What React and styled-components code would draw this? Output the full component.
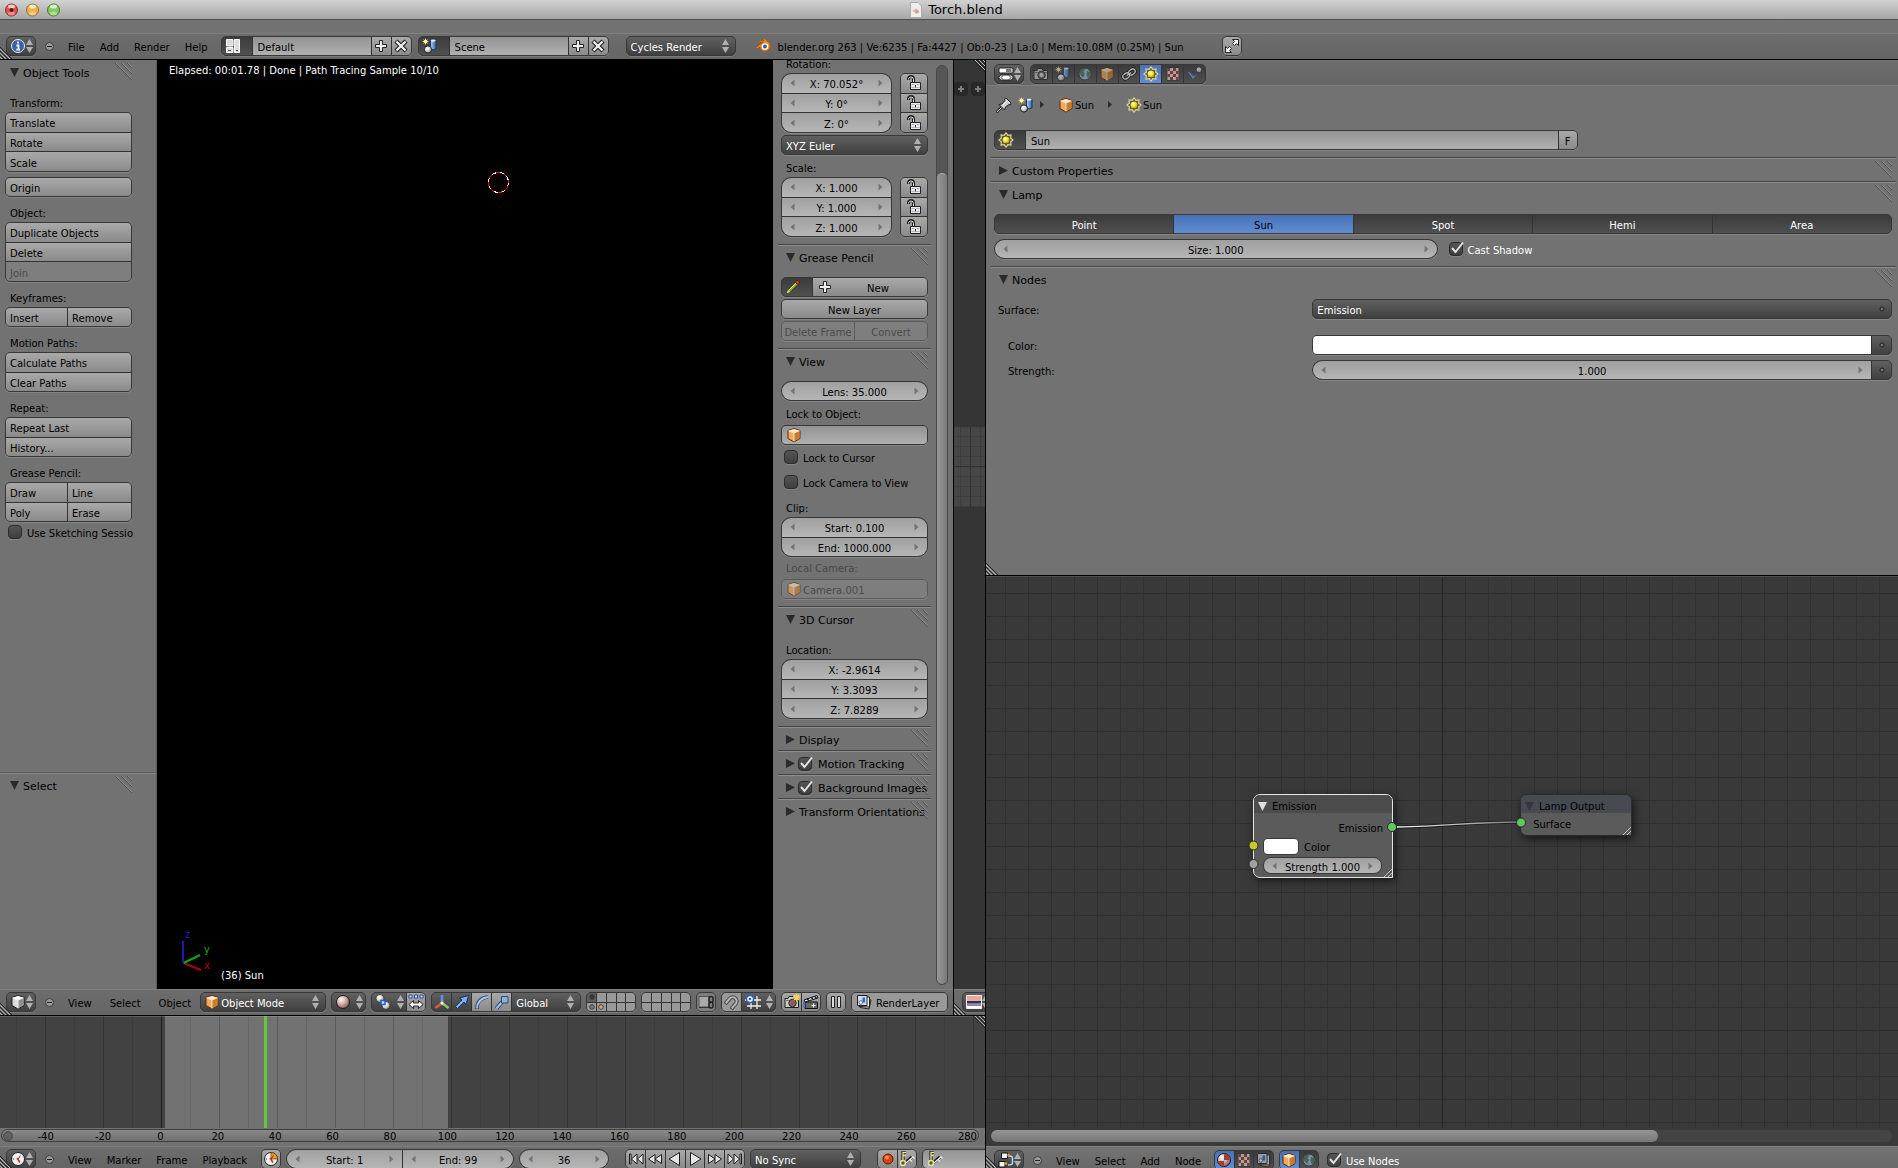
import React from 'react';
import styled, { createGlobalStyle, css } from 'styled-components';

const GlobalStyle = createGlobalStyle`
  * {
    box-sizing: border-box;
  }

  body {
    margin: 0;
    background: #727272;
    overflow: hidden;
  }

  body, button, input, select {
    font-family: 'DejaVu Sans', sans-serif;
    font-size: 10px;
    color: #000;
  }

  svg {
    display: block;
    flex: none;
  }
`;

const fills = {
  tool: 'linear-gradient(#a9a9a9, #8a8a8a)',
  flat: '#999999',
  num: 'linear-gradient(#a0a0a0, #b6b6b6)',
  text: 'linear-gradient(#939393, #b0b0b0)',
  menu: 'linear-gradient(#606060, #404040)',
  radio: 'linear-gradient(#3b3b3b, #505050)',
  blue: 'linear-gradient(#4871b6, #628dd2)',
  off: '#7e7e7e',
};

/* ---------- window frame ---------- */

const Window = styled.div`
  display: flex;
  flex-direction: column;
  height: 100vh;
  overflow: hidden;
  background: #727272;
`;

const TitleBar = styled.header`
  flex: none;
  display: grid;
  grid-template-columns: 1fr auto 1fr;
  align-items: center;
  height: 20px;
  padding: 0 5px;
  background: linear-gradient(#d2d2d2, #a6a6a6);
  border-bottom: 1px solid #515151;
`;

const Lights = styled.div`
  display: flex;
  gap: 8px;
`;

const Title = styled.h1`
  display: flex;
  align-items: center;
  gap: 6px;
  margin: 0 0 0 15px;
  font-size: 13px;
  line-height: 18px;
  font-weight: normal;
`;

const Strip = styled.div`
  flex: none;
  height: 13px;
  background: #727272;
`;

const Bar = styled.div`
  position: relative;
  flex: none;
  display: flex;
  align-items: flex-start;
  height: ${(p) => p.$height || 26}px;
  padding: ${(p) => p.$top || 2}px 6px 0;
  overflow: hidden;
  background: linear-gradient(#6d6d6d, #656565);
  border-top: 1px solid #808080;
`;

const InfoBar = styled(Bar)`
  border-bottom: 1px solid #000;
`;

const Workspace = styled.main`
  flex: 1;
  min-height: 0;
  display: grid;
  grid-template-columns: minmax(0, 986fr) minmax(0, 912fr);
`;

const LeftSide = styled.div`
  display: grid;
  grid-template-rows: minmax(0, 1fr) 152px;
  min-height: 0;
  border-right: 1px solid #000;
`;

const RightSide = styled.div`
  display: grid;
  grid-template-rows: minmax(0, 516fr) minmax(0, 592fr);
  min-height: 0;
`;

const TopLeft = styled.div`
  display: grid;
  grid-template-columns: minmax(0, 1fr) 31px;
  min-height: 0;
  border-bottom: 1px solid #000;
`;

const Area = styled.section`
  position: relative;
  display: flex;
  flex-direction: column;
  min-width: 0;
  min-height: 0;
  overflow: hidden;
`;

const ViewArea = styled(Area)`
  border-right: 1px solid #000;
`;

const CornerSvg = styled.svg`
  position: absolute;
  ${(p) => (p.$bottom ? 'bottom: 0; left: 0;' : 'top: 0; right: 0;')}
`;

function Corner({ bottom }) {
  return (
    <CornerSvg $bottom={bottom} width="12" height="12" viewBox="0 0 12 12" fill="none">
      <path d="M0 0L12 12M4 0L12 8M8 0L12 4" stroke="#222" transform={bottom ? 'rotate(180 6 6)' : undefined} />
      <path d="M2 0L12 10M6 0L12 6M10 0L12 2" stroke="#b4b4b4" transform={bottom ? 'rotate(180 6 6)' : undefined} />
    </CornerSvg>
  );
}

/* ---------- controls ---------- */

const Cluster = styled.div`
  flex: none;
  display: grid;
  grid-template-columns: ${(p) => p.$cols || 'minmax(0, 1fr)'};
  grid-auto-rows: minmax(0, 1fr);
  gap: 1px;
  width: ${(p) => (p.$width ? `${p.$width}px` : 'auto')};
  height: calc(20px * ${(p) => p.$rows || 1});
  margin-left: ${(p) => p.$left || 0}px;
  overflow: hidden;
  background: ${(p) => (p.$off ? '#5a5a5a' : '#333')};
  border: 1px solid ${(p) => (p.$off ? '#5a5a5a' : '#383838')};
  border-radius: ${(p) => (p.$round ? 10 : 5)}px;
  box-shadow: 0 1px 0 rgba(255, 255, 255, 0.14);
`;

const cell = css`
  min-width: 0;
  margin: 0;
  border: 0;
  outline: 0;
  border-radius: 0;
`;

const Btn = styled.button`
  ${cell}
  display: flex;
  align-items: center;
  justify-content: ${(p) => (p.$start ? 'flex-start' : 'center')};
  padding: 3px ${(p) => (p.$start ? 4 : 0)}px 0;
  white-space: nowrap;
  background: ${(p) => fills[p.$fill || 'tool']};
  color: ${(p) => (p.$fill === 'radio' ? '#fff' : '#000')};

  &:disabled {
    background: ${fills.off};
    color: #4a4a4a;
  }
`;

const IconBtn = styled(Btn)`
  padding: 0;
`;

const WideBtn = styled(Btn)`
  justify-content: flex-start;
  padding: 0 4px;

  span {
    flex: 1;
    padding-top: 3px;
    text-align: center;
  }
`;

const TextInput = styled.input`
  ${cell}
  width: 100%;
  padding: 3px 5px 0;
  background: ${fills.text};

  &:disabled {
    color: #4a4a4a;
  }
`;

const IconField = styled.div`
  display: flex;
  align-items: center;
  padding-left: 4px;
  background: ${(p) => (p.$off ? fills.off : fills.text)};

  ${TextInput} {
    padding-left: 1px;
    background: none;
  }
`;

const NumCell = styled.div`
  display: flex;
  align-items: center;
  min-width: 0;
  padding: 0 8px;
  background: ${fills.num};
`;

const NumInput = styled.input`
  ${cell}
  flex: 1;
  width: 0;
  padding: 3px 0 0;
  text-align: center;
  background: none;
`;

const SelectBox = styled.div`
  display: grid;
  grid-template-columns: minmax(0, 1fr);
  align-items: center;
  min-width: 0;
  background: ${(p) => fills[p.$fill || 'menu']};

  > * {
    grid-area: 1 / 1;
  }

  > svg {
    pointer-events: none;
    margin-left: 3px;
  }
`;

const EndSlot = styled.div`
  justify-self: end;
  margin-right: ${(p) => p.$right}px;
  pointer-events: none;
`;

const Select = styled.select`
  ${cell}
  appearance: none;
  width: 100%;
  height: 100%;
  padding: 3px 0 0 ${(p) => (p.$icon ? 20 : 4)}px;
  color: #fff;
  background: none;
`;

const ColorInput = styled.input`
  ${cell}
  appearance: none;
  width: 100%;
  height: 100%;
  padding: 0;
  background: #fff;

  &::-webkit-color-swatch-wrapper {
    padding: 0;
  }

  &::-webkit-color-swatch {
    border: 0;
  }
`;

const CheckLabel = styled.label`
  display: flex;
  align-items: center;
  gap: 3px;
  height: 20px;
  margin-left: ${(p) => p.$left || 0}px;
  white-space: nowrap;
  color: ${(p) => (p.$white ? '#fff' : '#000')};

  span {
    padding-top: 2px;
  }
`;

const CheckStack = styled.div`
  flex: none;
  display: grid;
  width: 16px;
  height: 18px;
  align-items: center;

  > * {
    grid-area: 1 / 1;
  }

  svg {
    pointer-events: none;
  }
`;

const CheckInput = styled.input`
  appearance: none;
  width: 14px;
  height: 14px;
  margin: 0;
  background: linear-gradient(#555, #3e3e3e);
  border: 1px solid #2c2c2c;
  border-radius: 4px;
  box-shadow: 0 1px 0 rgba(255, 255, 255, 0.14);
`;

const MenuNav = styled.nav`
  flex: none;
  display: flex;
  gap: ${(p) => p.$gap}px;
  margin-left: 13px;
`;

const MenuBtn = styled.button`
  ${cell}
  height: 20px;
  padding: 3px 0 0;
  background: none;
`;

const Collapse = styled.button`
  ${cell}
  flex: none;
  display: flex;
  align-items: center;
  height: 20px;
  margin-left: 8px;
  padding: 0;
  background: none;
`;

const Left = () => (
  <svg width="5" height="8" viewBox="0 0 5 8"><path d="M4.500 0.500V7.500L0.500 4Z" fill="#747474" /></svg>
);

const Right = () => (
  <svg width="5" height="8" viewBox="0 0 5 8"><path d="M0.500 0.500V7.500L4.500 4Z" fill="#747474" /></svg>
);

function NumField({ label, value, prefix = true }) {
  return (
    <NumCell>
      <Left />
      <NumInput aria-label={label} defaultValue={prefix ? `${label}: ${value}` : value} />
      <Right />
    </NumCell>
  );
}

function UpDown() {
  return (
    <svg width="9" height="14" viewBox="0 0 9 14">
      <path d="M4.500 0L8 6H1ZM4.500 14L8 8H1Z" fill="#b0b0b0" />
    </svg>
  );
}

function Menu({ label, value, icon }) {
  return (
    <SelectBox>
      <Select aria-label={label} $icon={Boolean(icon)}>
        <option>{value || ''}</option>
      </Select>
      {icon}
      <EndSlot $right={value ? 5 : 1}><UpDown /></EndSlot>
    </SelectBox>
  );
}

function Check({ label, checked, left, white, children }) {
  return (
    <CheckLabel $left={left} $white={white}>
      <CheckStack>
        <CheckInput type="checkbox" defaultChecked={checked} aria-label={label} />
        {checked && (
          <svg width="16" height="18" viewBox="0 0 16 18" fill="none">
            <path d="M3 8L6.500 12L14 2.500" stroke="#e2e2e2" strokeWidth="2" />
          </svg>
        )}
      </CheckStack>
      <span>{children || label}</span>
    </CheckLabel>
  );
}

function Menus({ items, gap }) {
  return (
    <>
      <Collapse aria-label="Collapse menus">
        <svg width="11" height="11" viewBox="0 0 11 11">
          <circle cx="5.500" cy="5.500" r="4" fill="#9a9a9a" stroke="#3c3c3c" />
          <path d="M3 5.500H8" stroke="#222" />
        </svg>
      </Collapse>
      <MenuNav $gap={gap}>
        {items.map((item) => <MenuBtn key={item}>{item}</MenuBtn>)}
      </MenuNav>
    </>
  );
}

/* ---------- icons ---------- */

function Icon({ children, size = 16, dim }) {
  return (
    <svg width={size} height={size} viewBox="0 0 16 16" fill="none" opacity={dim ? 0.6 : 1}>
      {children}
    </svg>
  );
}

const DefsSvg = styled.svg`
  position: absolute;
`;

function Defs() {
  return (
    <DefsSvg width="0" height="0">
      <defs>
        <radialGradient id="ball" cx="0.35" cy="0.3" r="0.8">
          <stop offset="0" stopColor="#fff" />
          <stop offset="0.4" stopColor="#e4e4e4" />
          <stop offset="1" stopColor="#7c7c7c" />
        </radialGradient>
        <radialGradient id="redball" cx="0.35" cy="0.3" r="0.8">
          <stop offset="0" stopColor="#fff" />
          <stop offset="0.5" stopColor="#d0a89e" />
          <stop offset="1" stopColor="#7a4a40" />
        </radialGradient>
        <radialGradient id="sunball" cx="0.4" cy="0.35" r="0.7">
          <stop offset="0" stopColor="#ffffe0" />
          <stop offset="0.45" stopColor="#f5e53c" />
          <stop offset="1" stopColor="#b39a10" />
        </radialGradient>
        <linearGradient id="blueTube">
          <stop offset="0" stopColor="#b4d2f8" />
          <stop offset="1" stopColor="#2f62ad" />
        </linearGradient>
        <linearGradient id="linkFade">
          <stop offset="0" stopColor="#fff" />
          <stop offset="1" stopColor="#777" />
        </linearGradient>
      </defs>
    </DefsSvg>
  );
}

const InfoIcon = () => (
  <Icon>
    <circle cx="8" cy="8" r="6.500" fill="#3a62a4" stroke="#e8eefc" />
    <path d="M8 3.500V5.500M6.500 7.500H8.500V11.500M6.300 11.700H10" stroke="#fff" strokeWidth="1.800" />
  </Icon>
);

const ScreenIcon = () => (
  <Icon>
    <path d="M1.500 1.500H8V8H1.500ZM1.500 9.500H8V14.500H1.500ZM9.500 1.500H14.500V14.500H9.500Z" fill="#dcdcdc" stroke="#fff" />
    <path d="M3 12.500H6M11 12.500H13" stroke="#555" />
  </Icon>
);

const SceneIcon = ({ dim }) => (
  <Icon dim={dim}>
    <path d="M3.500 0.500V6.500M0.500 3.500H6.500M1.500 1.500L5.500 5.500M5.500 1.500L1.500 5.500" stroke="#c9c060" />
    <circle cx="3.500" cy="3.500" r="2" fill="#fbf6a0" />
    <path d="M8.500 2.500Q11 0.500 14 2.500V11Q11.500 12.500 8.500 11Z" fill="url(#blueTube)" stroke="#1c3966" />
    <ellipse cx="11.200" cy="2.600" rx="2.500" ry="1.100" fill="#e4effd" />
    <circle cx="6" cy="11.500" r="3.600" fill="url(#ball)" stroke="#222" />
  </Icon>
);

const PlusIcon = () => (
  <Icon>
    <path d="M6.500 2.500H9.500V6.500H13.500V9.500H9.500V13.500H6.500V9.500H2.500V6.500H6.500Z" fill="#eee" stroke="#222" />
  </Icon>
);

const CloseIcon = () => (
  <Icon>
    <path d="M3 3L13 13M13 3L3 13" stroke="#222" strokeWidth="4.500" />
    <path d="M3.500 3.500L12.500 12.500M12.500 3.500L3.500 12.500" stroke="#f2f2f2" strokeWidth="2.200" />
  </Icon>
);

const BlenderIcon = ({ size }) => (
  <Icon size={size}>
    <path d="M1 9.500L8.500 4H4V2.500H9L8 1.500L9.500 0.500L14.500 5Q16 8 14.500 11Q11.500 14.500 7.500 13Q5 11.500 5 9L1.800 11Z" fill="#ef8a22" stroke="#9c4c0c" strokeWidth="0.600" />
    <circle cx="10" cy="8.500" r="3.300" fill="#fff" />
    <circle cx="10" cy="8.500" r="1.900" fill="#2a5da8" />
  </Icon>
);

const FullIcon = () => (
  <Icon>
    <path d="M8.500 1.500H14.500V7.500L12.500 5.500L10.500 7.500L8.500 5.500L10.500 3.500ZM7.500 14.500H1.500V8.500L3.500 10.500L5.500 8.500L7.500 10.500L5.500 12.500Z" fill="#f4f4f4" stroke="#222" />
  </Icon>
);

const CubeIcon = ({ orange, dim }) => (
  <Icon dim={dim}>
    <path d="M8 1.500L14 3.500V11.500L8 15L2 11.500V3.500Z" fill={orange ? '#f3a95c' : '#dcdcdc'} stroke={orange ? '#5a2d06' : '#1d1d1d'} />
    <path d="M8 2L13.500 3.800L8 6L2.500 3.800Z" fill={orange ? '#fde6cb' : '#fff'} />
    <path d="M8 6L13.500 3.800V11.200L8 14.400Z" fill={orange ? '#c97c2c' : '#909090'} />
    <path d="M2.500 3.800L8 6L13.500 3.800M8 6V14.400" stroke={orange ? '#fff0dc' : '#fff'} strokeWidth="0.800" />
  </Icon>
);

const LockIcon = () => (
  <Icon>
    <path d="M2.500 5V3.500Q3 1.500 5 1.500Q7.500 1.500 7.500 4V7" stroke="#222" strokeWidth="3" />
    <path d="M2.500 4.500V3.800Q3 2 5 2Q7.500 2 7.500 4.500V7" stroke="#ddd" />
    <path d="M4.500 7.500H14.500V14.500H4.500Z" fill="#e9e9e9" stroke="#222" />
    <path d="M5.500 9.500H8.500M10.500 9.500H13.500M5.500 12.500H8.500M10.500 12.500H13.500" stroke="#aab4c4" />
    <path d="M9.500 10V12.500" stroke="#222" />
  </Icon>
);

const PencilIcon = () => (
  <Icon>
    <path d="M1.500 14.500L3 10.500L10.500 3L13 5.500L5.500 13Z" fill="#8fb436" stroke="#26300a" />
    <path d="M4 11L11 4" stroke="#d9f07f" />
    <path d="M10.500 3L12 1.500Q14.500 1.500 14.500 4L13 5.500Z" fill="#e44" stroke="#6d1313" />
    <path d="M1.500 14.500L3 10.800L5.300 13Z" fill="#f0d49a" />
  </Icon>
);

const PropsIcon = () => (
  <Icon>
    <rect x="1" y="2" width="14" height="5" rx="1.500" fill="#fff" stroke="#222" />
    <path d="M8 3H13.500V6H8Z" fill="#777" />
    <rect x="1" y="9" width="14" height="5" rx="2.500" fill="#fff" stroke="#222" />
    <path d="M5 9.500L3 11.500L5 13.500M11 9.500L13 11.500L11 13.500" stroke="#222" />
  </Icon>
);

const CameraIcon = ({ dim, star }) => (
  <Icon dim={dim}>
    <path d="M1 4.500H4L5 2.500H9L10 4.500H14.500V13.500H1Z" fill="#c9c9c9" stroke="#222" />
    <path d="M1.500 6.500H14" stroke="#777" />
    <circle cx="8.500" cy="9" r="3.700" fill="#777" stroke="#222" />
    <circle cx="8.500" cy="9" r="2" fill={star ? '#b44' : '#ddd'} />
    {star && <path d="M12.500 0V7M9 3.500H16M10 1L15 6M15 1L10 6" stroke="#ffd94a" strokeWidth="1.300" />}
  </Icon>
);

const WorldIcon = ({ dim }) => (
  <Icon dim={dim}>
    <circle cx="8" cy="8" r="6" fill="#9cc0e2" stroke="#1e3547" />
    <path d="M3.500 4Q6 2 8 3L6.500 6L8 8L6 12Q3 9 2.500 7ZM10 5L13.500 6V10L11 13L9.500 9Z" fill="#4c7a56" />
  </Icon>
);

const LinkIcon = () => (
  <Icon>
    <g transform="rotate(-35 8 8)">
      <g stroke="#1e1e1e" strokeWidth="3">
        <rect x="1" y="5.500" width="7" height="5" rx="2.500" />
        <rect x="8" y="5.500" width="7" height="5" rx="2.500" />
      </g>
      <g stroke="#b5b5b5" strokeWidth="1.300">
        <rect x="1" y="5.500" width="7" height="5" rx="2.500" />
        <rect x="8" y="5.500" width="7" height="5" rx="2.500" />
        <path d="M5.500 8H10.500" />
      </g>
    </g>
  </Icon>
);

const rays = [0, 45, 90, 135, 180, 225, 270, 315];

const SunIcon = () => (
  <Icon>
    {rays.map((turn) => (
      <path key={turn} d="M5.700 3.800L8 0.800L10.300 3.800" transform={`rotate(${turn} 8 8)`} fill="#6b6840" stroke="#d8d298" strokeWidth="1.100" />
    ))}
    <circle cx="8" cy="8" r="4.200" fill="#4f4908" />
    <circle cx="8" cy="8" r="3.500" fill="url(#sunball)" />
  </Icon>
);

const CheckerIcon = ({ dim }) => (
  <Icon dim={dim}>
    <path d="M2 1.500H14V14.500H2Z" fill="#f2dcd8" stroke="#333" />
    <path d="M2.500 2H5V5H2.500ZM8 2H11V5H8ZM5 5H8V8H5ZM11 5H13.500V8H11ZM2.500 8H5V11H2.500ZM8 8H11V11H8ZM5 11H8V14H5ZM11 11H13.500V14H11Z" fill="#8f3a34" />
  </Icon>
);

const PhysicsIcon = () => (
  <Icon dim>
    <path d="M0.500 6L2 5L6.500 10L12 5.500L6 14Z" fill="#7ba6e2" stroke="#2b4672" />
    <circle cx="12" cy="3.800" r="3" fill="url(#ball)" stroke="#333" />
  </Icon>
);

const PinIcon = () => (
  <Icon>
    <path d="M0.500 15.500L5.500 10" stroke="#222" strokeWidth="2.500" />
    <path d="M3 7.500L8.500 13L9.500 10L13 7.500L14.500 8L15 6L10 1L8.500 2L9 3.500L6 7Z" fill="#cfcfcf" stroke="#222" />
    <path d="M1 15L5.500 10.500M7 8L11 4" stroke="#fff" />
  </Icon>
);

const MaterialIcon = ({ checker }) => (
  <Icon>
    <circle cx="8" cy="8" r="6.500" fill="url(#redball)" stroke="#1c1c1c" />
    {checker && <path d="M8 1.500A6.500 6.500 0 0 1 14.500 8H8ZM8 14.500A6.500 6.500 0 0 1 2 9H8Z" fill="#9a4238" />}
  </Icon>
);

const PivotIcon = () => (
  <Icon>
    <circle cx="5" cy="4.500" r="4" fill="url(#ball)" stroke="#222" strokeWidth="0.700" />
    <circle cx="11" cy="11.500" r="4" fill="url(#ball)" stroke="#222" strokeWidth="0.700" />
    <path d="M6 6.500H10V10.500H6Z" fill="#cfe0ff" stroke="#1d5fd0" strokeWidth="1.500" />
  </Icon>
);

const CentersIcon = () => (
  <Icon>
    <path d="M1 1H4V4H1ZM6.500 1H9.500V4H6.500ZM12 1H15V4H12Z" fill="#dbe7ff" stroke="#24488c" />
    <path d="M1 10.500L5.500 6.500V9H10.500V6.500L15 10.500L10.500 14.500V12H5.500V14.500Z" fill="#fff" stroke="#222" />
  </Icon>
);

const AxisIcon = () => (
  <Icon>
    <path d="M8 9V1" stroke="#5b92ea" strokeWidth="2.600" />
    <path d="M8 9L1.500 14" stroke="#e2553e" strokeWidth="2.600" />
    <path d="M8 9L14.500 14" stroke="#8ad048" strokeWidth="2.600" />
    <circle cx="8" cy="9" r="1.500" fill="#fff" />
  </Icon>
);

const ArrowIcon = () => (
  <Icon>
    <path d="M1.500 12.500L8 6L5.500 4L14.500 1.500L12 10.500L10 8L3.500 14.500Z" fill="#7fb0f2" stroke="#16325e" />
  </Icon>
);

const RotateIcon = () => (
  <Icon><path d="M3 15Q3 4 14 3" stroke="#2f486d" strokeWidth="3.500" /><path d="M3 14.500Q3.500 4.500 14 3" stroke="#a9c3e8" strokeWidth="1.800" /></Icon>
);

const ScaleIcon = () => (
  <Icon>
    <path d="M2.500 14.500L8 8" stroke="#2f486d" strokeWidth="4" />
    <path d="M2.500 14.500L9 7" stroke="#a9c3e8" strokeWidth="2" />
    <path d="M7.500 2.500H14V9H7.500Z" fill="#8fb0de" stroke="#2f486d" />
  </Icon>
);

const LockLayersIcon = () => (
  <Icon>
    <path d="M1 2.500H11V13H1Z" fill="#a9a9a9" stroke="#555" />
    <path d="M1 13.500H11" stroke="#333" />
    <rect x="11" y="2.500" width="4" height="6" rx="2" stroke="#222" strokeWidth="1.500" />
    <rect x="11" y="8" width="4" height="6" rx="2" stroke="#222" strokeWidth="1.500" />
  </Icon>
);

const MagnetIcon = () => (
  <Icon>
    <g transform="rotate(40 8 8)">
      <path d="M4 14V7A4 4 0 0 1 12 7V14" stroke="#4a4a4a" strokeWidth="4" />
      <path d="M4 13V7A4 4 0 0 1 12 7V13" stroke="#b5b5b5" strokeWidth="2" />
    </g>
  </Icon>
);

const SnapIcon = () => (
  <Icon>
    <path d="M6 2V15M12 2V15M0 6H16M2 12H16" stroke="#f0f0f0" strokeWidth="1.300" />
    <circle cx="5" cy="5" r="3.500" fill="#fff" stroke="#2463cf" strokeWidth="1.500" />
    <circle cx="5" cy="5" r="1.300" fill="#2463cf" />
  </Icon>
);

const ClapIcon = () => (
  <Icon>
    <path d="M2 8H14.500V14.500H2Z" fill="#666" stroke="#111" />
    <path d="M1 6L14 1.500L15 4L2 8Z" fill="#eee" stroke="#111" />
    <path d="M4 5L6 6.500M8 3.500L10 5M11.500 2.500L13.500 4" stroke="#111" strokeWidth="1.500" />
    <path d="M1 8V13" stroke="#3b77d8" strokeWidth="2" />
    <path d="M10.500 9.500V13.500M8.500 11.500H12.500" stroke="#eee" />
  </Icon>
);

const PauseIcon = () => (
  <Icon><path d="M3.500 2.500H6.500V13.500H3.500ZM9.500 2.500H12.500V13.500H9.500Z" fill="#ddd" stroke="#222" /></Icon>
);

const LayerIcon = ({ dim }) => (
  <Icon dim={dim}>
    <path d="M5 4L15 6L13 15L4 13.500Z" fill="#d8c892" stroke="#222" />
    <path d="M3 2.500L13.500 3V13L3 12.500Z" fill="#eee" stroke="#222" />
    <path d="M1.500 1.500H11V11.500H1.500Z" fill="#cfdcf5" stroke="#222" />
    <path d="M6.500 3.500H9V8.500H6.500Z" fill="#2f66c0" />
    <circle cx="4.800" cy="8.500" r="1.800" fill="#fff" stroke="#333" strokeWidth="0.700" />
  </Icon>
);

const ImageIcon = () => (
  <Icon>
    <path d="M0.500 1.500H15.500V14.500H0.500Z" fill="#e9a99b" stroke="#eee" />
    <path d="M1 7H15V9.500H1Z" fill="#34305e" />
    <path d="M1 9.500H15V12H1Z" fill="#8b86b5" />
    <path d="M1 12H15V14H1Z" fill="#fff" />
  </Icon>
);

const ClockIcon = ({ orange }) => (
  <Icon>
    <circle cx="8" cy="8" r="6.500" fill="#f1f1f1" stroke="#222" />
    {orange && <path d="M8 8V1.500A6.500 6.500 0 0 1 14.500 8Z" fill="#f49a1a" stroke="#6b3f00" strokeWidth="0.700" />}
    <path d="M8 8L10.500 4.500" stroke="#444" />
    <path d="M7 7L10 11.500" stroke="#d22" strokeWidth="1.500" />
    <circle cx="3.500" cy="8" r="0.700" fill="#555" />
  </Icon>
);

const playPaths = {
  'Jump to start': 'M1.500 3H3V13H1.500ZM3.500 8L9 3V13ZM9.500 8L15 3V13Z',
  'Previous keyframe': 'M1.500 8L8 3.500V12.500ZM8 8L14.500 3.500V12.500Z',
  'Play reverse': 'M2 8L12.500 1.500V14.500Z',
  Play: 'M3.500 1.500L14 8L3.500 14.500Z',
  'Next keyframe': 'M1.500 3.500L8 8L1.500 12.500ZM8 3.500L14.500 8L8 12.500Z',
  'Jump to end': 'M1 3L6.500 8L1 13ZM7 3L12.500 8L7 13ZM13 3H14.500V13H13Z',
};

const PlayIcon = ({ name }) => (
  <Icon><path d={playPaths[name]} fill="#e6e6e6" stroke="#1c1c1c" /></Icon>
);

const RecordIcon = () => (
  <Icon>
    <circle cx="8" cy="8" r="5" fill="#d8420f" stroke="#5d1b04" />
    <circle cx="7" cy="6.500" r="2" fill="#f58a5c" />
  </Icon>
);

const KeyIcon = () => (
  <Icon>
    <g stroke="#222" strokeWidth="3.200"><path d="M4 12V1.500H7M6 12L13 6" /></g>
    <path d="M4 10V1.500H7M4 4.500H6.500" stroke="#eee28c" strokeWidth="1.300" />
    <path d="M7 12L14 6L15.500 7.500M11 8.500L13 10.500" stroke="#e8e8e8" strokeWidth="1.300" />
    <circle cx="4" cy="12" r="2.500" fill="#555" stroke="#eee28c" strokeWidth="1.500" />
  </Icon>
);

const NodeIcon = () => (
  <Icon>
    <path d="M8 4H12Q14.500 4 14.500 7V11Q14.500 13 10 13" stroke="#bcd3f5" strokeWidth="1.500" />
    <path d="M3.500 1H9.500V6.500H3.500ZM1 9.500H7V15H1Z" fill="#f4f4f4" stroke="#111" />
    <circle cx="10.500" cy="3" r="1.300" fill="#f0981c" />
    <circle cx="8" cy="11.500" r="1.300" fill="#f0981c" />
  </Icon>
);

/* ---------- panels ---------- */

const PanelBox = styled.section`
  border-top: ${(p) => (p.$first ? '0' : '1px solid #454545')};
  box-shadow: ${(p) => (p.$first ? 'none' : 'inset 0 1px 0 #8e8e8e')};
`;

const PanelHead = styled.div`
  display: flex;
  align-items: flex-start;
  height: 23px;
  padding: 0 3px 0 8px;
`;

const PanelTitle = styled.h2`
  flex: 1;
  display: flex;
  align-items: center;
  gap: 4px;
  min-width: 0;
  height: 23px;
  margin: 0;
  padding-top: 3px;
  font-size: 11px;
  font-weight: normal;
  white-space: nowrap;

  ${CheckLabel} {
    gap: 4px;
    margin-left: -1px;
  }

  ${CheckLabel} span {
    padding-top: 0;
  }
`;

const Grip = styled.svg`
  margin: 3px 0 0 -17px;
`;

const PanelBody = styled.div`
  display: flex;
  flex-direction: column;
  gap: ${(p) => p.$gap || 0}px;
  padding: 9px 3px 7px;
`;

function Panel({ title, open, first, check, children, gap }) {
  return (
    <PanelBox $first={first}>
      <PanelHead>
        <PanelTitle>
          <svg width="9" height="10" viewBox="0 0 9 10">
            <path d={open ? 'M0 0H9L4.500 9Z' : 'M0 0L9 4.500L0 9Z'} fill="#2a2a2a" />
          </svg>
          {check ? <Check label={title} checked>{title}</Check> : title}
        </PanelTitle>
        <Grip width="17" height="17" viewBox="0 0 17 17" fill="none">
          <path d="M0 0L17 17M6 0L17 11M12 0L17 5" stroke="#4c4c4c" strokeWidth="0.800" />
          <path d="M1 0L17 16M7 0L17 10M13 0L17 4" stroke="#9a9a9a" strokeWidth="0.600" />
        </Grip>
      </PanelHead>
      {open && <PanelBody $gap={gap}>{children}</PanelBody>}
    </PanelBox>
  );
}

const Caption = styled.div`
  height: 20px;
  padding: 5px 0 0 5px;
  line-height: 14px;
  color: ${(p) => (p.$off ? '#484848' : '#000')};
`;

const Column = styled.div`
  display: flex;
  flex-direction: column;
  gap: ${(p) => p.$gap || 0}px;
`;

/* ---------- tool shelf ---------- */

const Body3D = styled.div`
  flex: 1;
  min-height: 0;
  display: grid;
  grid-template-columns: 157px minmax(0, 1fr) 180px;
`;

const Shelf = styled.aside`
  display: flex;
  flex-direction: column;
  overflow: hidden;
  border-right: 1px solid #5c5c5c;
  background: #727272;
`;

const ShelfTools = styled.div`
  flex: 713 1 0;
  padding: 0 21px 0 2px;
  overflow: hidden;
`;

const ShelfSelect = styled.div`
  flex: 216 1 0;
  border-top: 1px solid #5e5e5e;
  box-shadow: inset 0 1px 0 #858585;
  padding: 0 21px 0 2px;
`;

const half = '61px minmax(0, 1fr)';

function ToolGroup({ title, items, cols }) {
  return (
    <div>
      {title && <Caption>{title}</Caption>}
      <Cluster $rows={items.length / (cols ? 2 : 1)} $cols={cols}>
        {items.map((item) => (
          <Btn key={item} $start disabled={item === 'Join'}>{item}</Btn>
        ))}
      </Cluster>
    </div>
  );
}

function ToolShelf() {
  return (
    <Shelf>
      <ShelfTools>
        <Panel title="Object Tools" open first gap={5}>
          <ToolGroup title="Transform:" items={['Translate', 'Rotate', 'Scale']} />
          <ToolGroup items={['Origin']} />
          <ToolGroup title="Object:" items={['Duplicate Objects', 'Delete', 'Join']} />
          <ToolGroup title="Keyframes:" items={['Insert', 'Remove']} cols={half} />
          <ToolGroup title="Motion Paths:" items={['Calculate Paths', 'Clear Paths']} />
          <ToolGroup title="Repeat:" items={['Repeat Last', 'History...']} />
          <div>
            <ToolGroup title="Grease Pencil:" items={['Draw', 'Line', 'Poly', 'Erase']} cols={half} />
            <Check label="Use Sketching Sessio" left={3} />
          </div>
        </Panel>
      </ShelfTools>
      <ShelfSelect>
        <Panel title="Select" open first />
      </ShelfSelect>
    </Shelf>
  );
}

/* ---------- 3D view ---------- */

const Viewport = styled.div`
  position: relative;
  overflow: hidden;
  background: #000;
  color: #fff;
`;

const Elapsed = styled.div`
  padding: 4px 12px;
  line-height: 13px;
`;

const ObjectName = styled.div`
  position: absolute;
  left: 64px;
  bottom: 7px;
  line-height: 13px;
`;

const LampMark = styled.svg`
  position: absolute;
  left: 331px;
  top: 112px;
`;

const AxisMark = styled.svg`
  position: absolute;
  left: 22px;
  bottom: 12px;
`;

const NPanel = styled.aside`
  display: grid;
  grid-template-columns: 153px 12px;
  gap: 5px;
  padding: 0 5px;
  overflow: hidden;
  background: #727272;
`;

const NTop = styled.div`
  display: flex;
  flex-direction: column;
  gap: 2px;
  margin-top: -7px;
  padding: 0 3px 7px;
`;

const LockRow = styled.div`
  display: grid;
  grid-template-columns: minmax(0, 1fr) 28px;
  gap: 8px;
`;

const Track = styled.div`
  margin: 5px 0 4px;
  padding-top: 107px;
  border: 1px solid #474747;
  border-radius: 6px;
  background: #565656;
`;

const Thumb = styled.div`
  height: 100%;
  border-top: 1px solid #aaa;
  border-radius: 6px;
  background: linear-gradient(90deg, #979797, #7a7a7a);
`;

function LockedAxes({ title, values }) {
  return (
    <div>
      <Caption>{title}</Caption>
      <LockRow>
        <Cluster $rows={3} $round>
          {values.map(([axis, value]) => <NumField key={axis} label={axis} value={value} />)}
        </Cluster>
        <Cluster $rows={3}>
          {values.map(([axis]) => (
            <IconBtn key={axis} aria-label={`Lock ${axis}`}><LockIcon /></IconBtn>
          ))}
        </Cluster>
      </LockRow>
    </div>
  );
}

function PropertiesShelf() {
  return (
    <NPanel>
      <div>
        <NTop>
          <LockedAxes title="Rotation:" values={[['X', '70.052°'], ['Y', '0°'], ['Z', '0°']]} />
          <Cluster><Menu label="Rotation mode" value="XYZ Euler" /></Cluster>
          <LockedAxes title="Scale:" values={[['X', '1.000'], ['Y', '1.000'], ['Z', '1.000']]} />
        </NTop>
        <Panel title="Grease Pencil" open gap={2}>
          <Cluster $cols="30px minmax(0, 1fr)">
            <SelectBox $fill="radio"><PencilIcon /></SelectBox>
            <WideBtn><PlusIcon /><span>New</span></WideBtn>
          </Cluster>
          <Cluster><Btn>New Layer</Btn></Cluster>
          <Cluster $cols="72px minmax(0, 1fr)" $off>
            <Btn disabled>Delete Frame</Btn>
            <Btn disabled>Convert</Btn>
          </Cluster>
        </Panel>
        <Panel title="View" open gap={5}>
          <Column $gap={2}>
            <Cluster $round><NumField label="Lens" value="35.000" /></Cluster>
            <Caption>Lock to Object:</Caption>
            <Cluster>
              <IconField><CubeIcon orange /><TextInput aria-label="Lock to Object" /></IconField>
            </Cluster>
            <Check label="Lock to Cursor" left={3} />
          </Column>
          <Check label="Lock Camera to View" left={3} />
          <div>
            <Caption>Clip:</Caption>
            <Cluster $rows={2} $round>
              <NumField label="Start" value="0.100" />
              <NumField label="End" value="1000.000" />
            </Cluster>
            <Column $gap={2}>
              <Caption $off>Local Camera:</Caption>
              <Cluster $off>
                <IconField $off>
                  <CubeIcon orange dim />
                  <TextInput aria-label="Local Camera" defaultValue="Camera.001" disabled />
                </IconField>
              </Cluster>
            </Column>
          </div>
        </Panel>
        <Panel title="3D Cursor" open>
          <Caption>Location:</Caption>
          <Cluster $rows={3} $round>
            <NumField label="X" value="-2.9614" />
            <NumField label="Y" value="3.3093" />
            <NumField label="Z" value="7.8289" />
          </Cluster>
        </Panel>
        <Panel title="Display" />
        <Panel title="Motion Tracking" check />
        <Panel title="Background Images" check />
        <Panel title="Transform Orientations" />
      </div>
      <Track><Thumb /></Track>
    </NPanel>
  );
}

const LayerBtn = styled.button`
  ${cell}
  display: flex;
  align-items: center;
  justify-content: center;
  padding: 0;
  background: ${(p) => (p.$on ? '#5e5e5e' : '#999')};
`;

const dots = { 0: '#3a3a3a', 5: '#777', 6: '#d9a066' };

function Layers({ first }) {
  return (
    <Cluster $width={50} $left={5} $cols="repeat(5, minmax(0, 1fr))">
      {Array.from({ length: 10 }, (_, i) => (
        <LayerBtn key={i} aria-label={`Layer ${first + i}`} $on={first === 1 && i === 0}>
          {first === 1 && dots[i] && (
            <svg width="6" height="6" viewBox="0 0 6 6"><circle cx="3" cy="3" r="2.300" fill={dots[i]} stroke="#333" strokeWidth="0.800" /></svg>
          )}
        </LayerBtn>
      ))}
    </Cluster>
  );
}

function View3D() {
  return (
    <ViewArea>
      <Body3D>
        <ToolShelf />
        <Viewport>
          <Elapsed>Elapsed: 00:01.78 | Done | Path Tracing Sample 10/10</Elapsed>
          <LampMark width="22" height="22" viewBox="0 0 22 22" fill="none" shapeRendering="crispEdges">
            <circle cx="10.500" cy="10.500" r="10" stroke="#fff" strokeDasharray="4 4" />
            <circle cx="10.500" cy="10.500" r="10" stroke="#f00" strokeDasharray="4 4" strokeDashoffset="4" />
          </LampMark>
          <AxisMark width="38" height="50" viewBox="0 0 38 50" fontSize="10">
            <path d="M4.500 36L22 43" stroke="#b00000" strokeWidth="2" />
            <path d="M4.500 36L21 28" stroke="#00b000" strokeWidth="2" />
            <path d="M4 36V14" stroke="#1a1ab4" strokeWidth="2" />
            <text x="6" y="11" fill="#1a1ab4">z</text>
            <text x="25" y="26" fill="#00b000">y</text>
            <text x="25" y="42" fill="#b00000">x</text>
          </AxisMark>
          <ObjectName>(36) Sun</ObjectName>
        </Viewport>
        <PropertiesShelf />
      </Body3D>
      <Bar>
        <Cluster $width={30}><Menu label="Editor type" icon={<CubeIcon />} /></Cluster>
        <Menus items={['View', 'Select', 'Object']} gap={18} />
        <Cluster $width={126} $left={9}><Menu label="Mode" value="Object Mode" icon={<CubeIcon orange />} /></Cluster>
        <Cluster $width={35} $left={5}><Menu label="Shading" icon={<MaterialIcon />} /></Cluster>
        <Cluster $width={55} $left={5} $cols="34px minmax(0, 1fr)">
          <Menu label="Pivot" icon={<PivotIcon />} />
          <IconBtn aria-label="Manipulate centers"><CentersIcon /></IconBtn>
        </Cluster>
        <Cluster $width={150} $left={5} $cols="repeat(4, 19px) minmax(0, 1fr)">
          <IconBtn aria-label="Manipulator" $fill="menu"><AxisIcon /></IconBtn>
          <IconBtn aria-label="Translate" $fill="menu"><ArrowIcon /></IconBtn>
          <IconBtn aria-label="Rotate"><RotateIcon /></IconBtn>
          <IconBtn aria-label="Scale"><ScaleIcon /></IconBtn>
          <Menu label="Orientation" value="Global" />
        </Cluster>
        <Layers first={1} />
        <Layers first={11} />
        <Cluster $width={20} $left={5}><IconBtn $fill="off" aria-label="Lock layers"><LockLayersIcon /></IconBtn></Cluster>
        <Cluster $width={55} $left={5} $cols="19px minmax(0, 1fr)">
          <IconBtn aria-label="Snap" $fill="flat"><MagnetIcon /></IconBtn>
          <Menu label="Snap element" icon={<SnapIcon />} />
        </Cluster>
        <Cluster $width={40} $left={5} $cols="19px minmax(0, 1fr)">
          <IconBtn aria-label="Render image"><CameraIcon star /></IconBtn>
          <IconBtn aria-label="Render animation"><ClapIcon /></IconBtn>
        </Cluster>
        <Cluster $width={20} $left={5}><IconBtn aria-label="Pause"><PauseIcon /></IconBtn></Cluster>
        <Cluster $width={97} $left={5}>
          <WideBtn $fill="flat"><LayerIcon /><span>RenderLayer</span></WideBtn>
        </Cluster>
        <Corner bottom />
      </Bar>
    </ViewArea>
  );
}

/* ---------- narrow image editor ---------- */

const SliverTabs = styled.div`
  display: flex;
  gap: 3px;
  padding-top: 22px;
  flex: 345 1 0;
`;

const SliverTab = styled.button`
  ${cell}
  flex: 1;
  height: 14px;
  display: flex;
  align-items: center;
  justify-content: center;
  padding: 0;
  background: #282828;
  border-radius: 4px;
`;

const SliverGrid = styled.div`
  flex: none;
  height: 80px;
  background:
    linear-gradient(#303030, #303030) 16px 0 / 1px 100% no-repeat,
    linear-gradient(#303030, #303030) 0 39px / 100% 1px no-repeat,
    linear-gradient(90deg, #3d3d3d 1px, transparent 1px) 6px 0 / 10px 10px,
    linear-gradient(#3d3d3d 1px, #464646 1px) 0 9px / 10px 10px;
`;

const SliverBody = styled.div`
  flex: 1;
  display: flex;
  flex-direction: column;
  background: #353535;
`;

const SliverRest = styled.div`
  flex: 482 1 0;
`;

function ImageSliver() {
  return (
    <Area>
      <SliverBody>
        <SliverTabs>
          {['Open tools', 'Open properties'].map((name) => (
            <SliverTab key={name} aria-label={name}>
              <svg width="6" height="6" viewBox="0 0 6 6"><path d="M3 0V6M0 3H6" stroke="#7d7d7d" strokeWidth="2" /></svg>
            </SliverTab>
          ))}
        </SliverTabs>
        <SliverGrid />
        <SliverRest />
        <Corner />
      </SliverBody>
      <Bar>
        <Cluster $width={30} $left={2}><Menu label="Editor type" icon={<ImageIcon />} /></Cluster>
        <Corner bottom />
      </Bar>
    </Area>
  );
}

/* ---------- timeline ---------- */

const Graph = styled.svg`
  flex: 1;
  width: 100%;
  min-height: 0;
  background: #424242;
`;

const Ruler = styled.div`
  flex: none;
  display: grid;
  grid-template-columns: repeat(16, minmax(0, 137fr)) minmax(0, 100fr);
  align-items: center;
  height: 13px;
  margin: 1px 6px 4px 1px;
  padding: 1px 1px 0 15px;
  background: linear-gradient(#8a8a8a, #6f6f6f);
  border: 1px solid #3f3f3f;
  border-radius: 7px;
  text-align: center;
  line-height: 12px;

  span:last-child {
    text-align: right;
  }
`;

const RulerArea = styled.div`
  position: relative;
  flex: none;
  background: #727272;
`;

const RulerKnob = styled.svg`
  position: absolute;
  left: 3px;
  top: 3px;
`;

function Timeline() {
  const minor = Array.from({ length: 34 }, (_, i) => 16 + i * 29);
  return (
    <Area>
      <Graph>
        <rect x="165" y="0" width="283" height="100%" fill="#727272" />
        {minor.map((x, i) => (
          <rect key={x} x={x} y="0" width="1" height="100%" fill="#000" opacity={i % 2 ? 0.22 : 0.09} />
        ))}
        <rect x="161" y="0" width="1" height="100%" fill="#1c1c1c" />
        <rect x="264" y="0" width="3" height="100%" fill="#5fc83b" />
        <rect x="0" y="0" width="100%" height="1" fill="#fff" opacity="0.15" />
      </Graph>
      <RulerArea>
        <Ruler>
          {Array.from({ length: 17 }, (_, i) => <span key={i}>{i * 20 - 40}</span>)}
        </Ruler>
        <RulerKnob width="10" height="10" viewBox="0 0 10 10">
          <circle cx="5" cy="5" r="4.500" fill="#5f5f5f" stroke="#4a4a4a" />
        </RulerKnob>
      </RulerArea>
      <Bar $height={22}>
        <Cluster $width={30}><Menu label="Editor type" icon={<ClockIcon />} /></Cluster>
        <Menus items={['View', 'Marker', 'Frame', 'Playback']} gap={15} />
        <Cluster $width={20} $left={14}><IconBtn aria-label="Preview range"><ClockIcon orange /></IconBtn></Cluster>
        <Cluster $width={228} $left={5} $round $cols="115px minmax(0, 1fr)">
          <NumField label="Start" value="1" />
          <NumField label="End" value="99" />
        </Cluster>
        <Cluster $width={90} $left={5} $round><NumField label="Current frame" value="36" prefix={false} /></Cluster>
        <Cluster $width={120} $left={16} $cols="repeat(6, minmax(0, 1fr))">
          {Object.keys(playPaths).map((name) => (
            <IconBtn key={name} aria-label={name}><PlayIcon name={name} /></IconBtn>
          ))}
        </Cluster>
        <Cluster $width={111} $left={5}><Menu label="Sync mode" value="No Sync" /></Cluster>
        <Cluster $width={40} $left={16} $cols="19px minmax(0, 1fr)">
          <IconBtn aria-label="Record"><RecordIcon /></IconBtn>
          <IconBtn aria-label="Keying set"><KeyIcon /></IconBtn>
        </Cluster>
        <Cluster $width={90} $left={5}>
          <IconField><KeyIcon /><TextInput aria-label="Active keying set" /></IconField>
        </Cluster>
        <Corner bottom />
      </Bar>
      <Corner />
    </Area>
  );
}

/* ---------- properties editor ---------- */

const PropsArea = styled(Area)`
  background: #727272;
  border-bottom: 1px solid #000;
`;

const PropsBar = styled(Bar)`
  border-top-color: #747474;
  border-bottom: 1px solid #7f7f7f;
`;

const PropsPanels = styled.div`
  padding: 0 2px 0 5px;

  ${PanelBody} {
    padding: 9px 4px 7px 3px;
  }

  ${PanelHead} {
    padding-right: 4px;
  }
`;

const Crumbs = styled.nav`
  display: flex;
  align-items: center;
  height: 37px;
  padding-left: 5px;
`;

const Crumb = styled.a`
  display: flex;
  align-items: center;
  gap: 1px;
  color: #000;
  text-decoration: none;

  span {
    padding-top: 2px;
  }
`;

const CrumbArrow = styled.svg`
  margin: 0 14px 0 ${(p) => p.$left}px;
`;

const IdRow = styled.div`
  display: grid;
  grid-template-columns: minmax(0, 583fr) minmax(0, 314fr);
  padding: 7px 4px 7px 3px;
`;

const SizeRow = styled.div`
  display: grid;
  grid-template-columns: minmax(0, 1fr) minmax(0, 1fr);
  gap: 11px;
`;

const FieldRow = styled.div`
  display: grid;
  grid-template-columns: minmax(0, 318fr) minmax(0, 579fr);
  align-items: center;
  margin-bottom: ${(p) => p.$after || 0}px;

  label {
    padding: 3px 0 0 ${(p) => (p.$sub ? 14 : 4)}px;
  }
`;

const LeftRound = styled(Cluster)`
  border-radius: 10px 5px 5px 10px;
`;

const Dot = () => (
  <svg width="8" height="6" viewBox="0 0 8 6"><circle cx="4" cy="3" r="2" fill="#777" stroke="#1d1d1d" /></svg>
);

const Arrow = ({ left }) => (
  <CrumbArrow $left={left} width="4" height="7" viewBox="0 0 4 7"><path d="M0 0L4 3.500L0 7Z" fill="#2b2b2b" /></CrumbArrow>
);

const PinBtn = styled.button`
  ${cell}
  margin-right: 6px;
  padding: 0;
  background: none;
`;

const contexts = [
  ['Render', <CameraIcon dim />], ['Scene', <SceneIcon dim />], ['World', <WorldIcon dim />],
  ['Object', <CubeIcon orange dim />], ['Constraints', <LinkIcon />], ['Data', <SunIcon />],
  ['Texture', <CheckerIcon dim />], ['Physics', <PhysicsIcon />],
];

function PropertiesEditor() {
  return (
    <PropsArea>
      <PropsBar $top={3}>
        <Cluster $width={30} $left={2}><Menu label="Editor type" icon={<PropsIcon />} /></Cluster>
        <Cluster $width={176} $left={6} $cols="repeat(8, minmax(0, 1fr))">
          {contexts.map(([name, icon]) => (
            <IconBtn key={name} aria-label={name} $fill={name === 'Data' ? 'blue' : 'radio'}>{icon}</IconBtn>
          ))}
        </Cluster>
      </PropsBar>
      <PropsPanels>
        <Crumbs>
          <PinBtn aria-label="Pin"><PinIcon /></PinBtn>
          <Crumb href="#scene" aria-label="Scene"><SceneIcon /></Crumb>
          <Arrow left={6} />
          <Crumb href="#object"><CubeIcon orange /><span>Sun</span></Crumb>
          <Arrow left={14} />
          <Crumb href="#data"><SunIcon /><span>Sun</span></Crumb>
        </Crumbs>
        <IdRow>
          <Cluster $cols="30px minmax(0, 1fr) 18px">
            <SelectBox $fill="radio"><SunIcon /></SelectBox>
            <TextInput aria-label="Lamp name" defaultValue="Sun" />
            <Btn>F</Btn>
          </Cluster>
        </IdRow>
        <Panel title="Custom Properties" />
        <Panel title="Lamp" open gap={5}>
          <Cluster $cols="repeat(5, minmax(0, 1fr))">
            {['Point', 'Sun', 'Spot', 'Hemi', 'Area'].map((type) => (
              <Btn key={type} $fill={type === 'Sun' ? 'blue' : 'radio'} aria-pressed={type === 'Sun'}>{type}</Btn>
            ))}
          </Cluster>
          <SizeRow>
            <Cluster $round><NumField label="Size" value="1.000" /></Cluster>
            <Check label="Cast Shadow" checked white />
          </SizeRow>
        </Panel>
        <Panel title="Nodes" open>
          <FieldRow $after={16}>
            <label htmlFor="surface">Surface:</label>
            <Cluster>
              <SelectBox>
                <Select id="surface"><option>Emission</option></Select>
                <EndSlot $right={5}><Dot /></EndSlot>
              </SelectBox>
            </Cluster>
          </FieldRow>
          <FieldRow $sub $after={5}>
            <label htmlFor="color">Color:</label>
            <Cluster $cols="minmax(0, 1fr) 19px">
              <ColorInput id="color" type="color" defaultValue="#ffffff" />
              <IconBtn aria-label="Color input" $fill="menu"><Dot /></IconBtn>
            </Cluster>
          </FieldRow>
          <FieldRow $sub>
            <label htmlFor="strength">Strength:</label>
            <LeftRound $cols="minmax(0, 1fr) 19px">
              <NumCell>
                <Left />
                <NumInput id="strength" defaultValue="1.000" />
                <Right />
              </NumCell>
              <IconBtn aria-label="Strength input" $fill="menu"><Dot /></IconBtn>
            </LeftRound>
          </FieldRow>
        </Panel>
      </PropsPanels>
      <Corner bottom />
    </PropsArea>
  );
}

/* ---------- node editor ---------- */

const NodeCanvas = styled.div`
  position: relative;
  flex: 1;
  overflow: hidden;
  border-top: 1px solid #505050;
  background:
    linear-gradient(#252525, #252525) 456px 0 / 1px 100% no-repeat,
    linear-gradient(90deg, #2f2f2f 1px, transparent 1px) 19px 0 / 23px 23px,
    linear-gradient(#2f2f2f 1px, #393939 1px) 0 16px / 23px 23px;
`;

const NodeBox = styled.div`
  position: absolute;
  left: ${(p) => p.$x}px;
  top: 217px;
  width: ${(p) => p.$w}px;
  height: ${(p) => p.$h}px;
  background: #5b5b5b;
  border: 1px solid ${(p) => (p.$active ? '#e4e4e4' : '#2c2c2c')};
  border-radius: 7px 7px 0 7px;
  box-shadow: 2px 3px 8px rgba(0, 0, 0, 0.6);
`;

const NodeHead = styled.div`
  display: flex;
  align-items: center;
  gap: 5px;
  height: 18px;
  padding: 4px 0 0 4px;
  border-radius: 6px 6px 0 0;
  background: ${(p) => (p.$output ? '#474b51' : '#4c4c4c')};
`;

const NodeLine = styled.div`
  display: flex;
  align-items: center;
  justify-content: ${(p) => (p.$end ? 'flex-end' : 'flex-start')};
  gap: 5px;
  height: 19px;
  margin-top: ${(p) => p.$top || 0}px;
  padding: 0 9px;

  span {
    padding-top: 2px;
  }
`;

const NodeSwatch = styled.div`
  width: 36px;
  height: 17px;
  overflow: hidden;
  border: 1px solid #383838;
  border-radius: 5px;
`;

const NodeNum = styled.div`
  width: 119px;
  height: 17px;
  display: grid;
  overflow: hidden;
  border: 1px solid #383838;
  border-radius: 8px;
`;

const Wire = styled.svg`
  position: absolute;
  left: 262px;
  top: 212px;
  pointer-events: none;
`;

const ResizeMark = styled.svg`
  position: absolute;
  right: 0;
  bottom: 0;
`;

const NodeScroll = styled.div`
  flex: none;
  height: 18px;
  padding: 2px 6px 4px 5px;
  background: #3a3a3a;
`;

const NodeTrack = styled.div`
  height: 12px;
  border-radius: 6px;
  background: #444;
`;

const NodeThumb = styled.div`
  width: 74%;
  height: 12px;
  border-radius: 6px;
  background: linear-gradient(#969696, #777);
`;

const NodeBar = styled(Bar)`
  background: linear-gradient(#737373, #696969);
`;

const Resize = () => (
  <ResizeMark width="8" height="8" viewBox="0 0 8 8">
    <path d="M0 8L8 0M4 8L8 4" stroke="#c4c4c4" />
  </ResizeMark>
);

function NodeEditor() {
  return (
    <Area>
      <NodeCanvas>
        <NodeBox $x={267} $w={140} $h={84} $active>
          <NodeHead>
            <svg width="9" height="9" viewBox="0 0 9 9"><path d="M0 0H9L4.500 9Z" fill="#dedede" /></svg>
            Emission
          </NodeHead>
          <NodeLine $end $top={5}><span>Emission</span></NodeLine>
          <NodeLine>
            <NodeSwatch><ColorInput type="color" defaultValue="#ffffff" aria-label="Color" /></NodeSwatch>
            <span>Color</span>
          </NodeLine>
          <NodeLine>
            <NodeNum><NumField label="Strength" value="Strength 1.000" prefix={false} /></NodeNum>
          </NodeLine>
          <Resize />
        </NodeBox>
        <NodeBox $x={534} $w={112} $h={42}>
          <NodeHead $output>
            <svg width="9" height="9" viewBox="0 0 9 9"><path d="M0 0H9L4.500 9Z" fill="#33363a" /></svg>
            Lamp Output
          </NodeHead>
          <NodeLine $top={1}>
            <span>&nbsp;Surface</span>
          </NodeLine>
          <Resize />
        </NodeBox>
        <Wire width="290" height="80" viewBox="0 0 290 80" fill="none">
          <path d="M145 38C190 38 220 33 272 33" stroke="#1a1a1a" strokeWidth="3" />
          <path d="M145 38C190 38 220 33 272 33" stroke="url(#linkFade)" strokeWidth="1.300" />
          <g stroke="#2a2a2a">
            <circle cx="144" cy="38" r="4.500" fill="#5fc75f" />
            <circle cx="273" cy="33.500" r="4.500" fill="#5fc75f" />
            <circle cx="5.500" cy="56.500" r="4.500" fill="#c7c729" />
            <circle cx="5.500" cy="75" r="4.500" fill="#a1a1a1" />
          </g>
        </Wire>
      </NodeCanvas>
      <NodeScroll><NodeTrack><NodeThumb /></NodeTrack></NodeScroll>
      <NodeBar $height={22} $top={3}>
        <Cluster $width={30} $left={2}><Menu label="Editor type" icon={<NodeIcon />} /></Cluster>
        <Menus items={['View', 'Select', 'Add', 'Node']} gap={15} />
        <Cluster $width={60} $left={13} $cols="repeat(3, minmax(0, 1fr))">
          <IconBtn aria-label="Material nodes" $fill="blue"><MaterialIcon checker /></IconBtn>
          <IconBtn aria-label="Texture nodes" $fill="radio"><CheckerIcon dim /></IconBtn>
          <IconBtn aria-label="Compositing nodes" $fill="radio"><LayerIcon dim /></IconBtn>
        </Cluster>
        <Cluster $width={40} $left={5} $cols="repeat(2, minmax(0, 1fr))">
          <IconBtn aria-label="Object shader" $fill="blue"><CubeIcon orange /></IconBtn>
          <IconBtn aria-label="World shader" $fill="radio"><WorldIcon dim /></IconBtn>
        </Cluster>
        <Check label="Use Nodes" checked white left={8} />
        <Corner bottom />
      </NodeBar>
    </Area>
  );
}

/* ---------- top of the window ---------- */

const Stats = styled.div`
  flex: none;
  display: flex;
  align-items: center;
  gap: 7px;
  height: 20px;
  margin-left: 19px;
  white-space: nowrap;

  span {
    padding-top: 2px;
  }
`;

function Light({ color, edge, dot }) {
  return (
    <svg width="13" height="15" viewBox="0 0 13 15">
      <circle cx="6.500" cy="8" r="6" fill={color} stroke={edge} />
      <ellipse cx="6.500" cy="4.500" rx="3.500" ry="2" fill="#fff" opacity="0.700" />
      <ellipse cx="6.500" cy="11.500" rx="3.500" ry="2" fill="#fff" opacity="0.350" />
      {dot && <circle cx="6.500" cy="8" r="2" fill="#6b1010" />}
    </svg>
  );
}

function DataBlock({ label, value, icon, left }) {
  return (
    <Cluster $width={191} $left={left} $cols="30px minmax(0, 1fr) 19px 19px">
      <SelectBox $fill="radio">{icon}</SelectBox>
      <TextInput aria-label={label} defaultValue={value} />
      <IconBtn aria-label={`Add ${label}`}><PlusIcon /></IconBtn>
      <IconBtn aria-label={`Delete ${label}`}><CloseIcon /></IconBtn>
    </Cluster>
  );
}

export default function App() {
  return (
    <Window>
      <GlobalStyle />
      <Defs />
      <TitleBar>
        <Lights>
          <Light color="#e0524c" edge="#8a2a26" dot />
          <Light color="#f2b04a" edge="#9c6a1e" />
          <Light color="#86c95c" edge="#437a24" />
        </Lights>
        <Title>
          <svg width="12" height="16" viewBox="0 0 12 16">
            <path d="M0.500 0.500H8L11.500 4V15.500H0.500Z" fill="#eee" stroke="#aaa" />
            <path d="M2 9L6 6.500L9 8.500V11L6 12L4.500 10Z" fill="#e8b68a" />
            <circle cx="6.800" cy="9.500" r="1.200" fill="#8aa6cc" />
          </svg>
          Torch.blend
        </Title>
      </TitleBar>
      <Strip />
      <InfoBar $height={27}>
        <Cluster $width={30}><Menu label="Editor type" icon={<InfoIcon />} /></Cluster>
        <Menus items={['File', 'Add', 'Render', 'Help']} gap={15} />
        <DataBlock label="Screen" value="Default" icon={<ScreenIcon />} left={13} />
        <DataBlock label="Scene" value="Scene" icon={<SceneIcon />} left={6} />
        <Cluster $width={110} $left={17}><Menu label="Render engine" value="Cycles Render" /></Cluster>
        <Stats>
          <BlenderIcon />
          <span>blender.org 263 | Ve:6235 | Fa:4427 | Ob:0-23 | La:0 | Mem:10.08M (0.25M) | Sun</span>
        </Stats>
        <Cluster $width={20} $left={38}><IconBtn aria-label="Back to previous"><FullIcon /></IconBtn></Cluster>
        <Corner bottom />
      </InfoBar>
      <Workspace>
        <LeftSide>
          <TopLeft>
            <View3D />
            <ImageSliver />
          </TopLeft>
          <Timeline />
        </LeftSide>
        <RightSide>
          <PropertiesEditor />
          <NodeEditor />
        </RightSide>
      </Workspace>
    </Window>
  );
}
